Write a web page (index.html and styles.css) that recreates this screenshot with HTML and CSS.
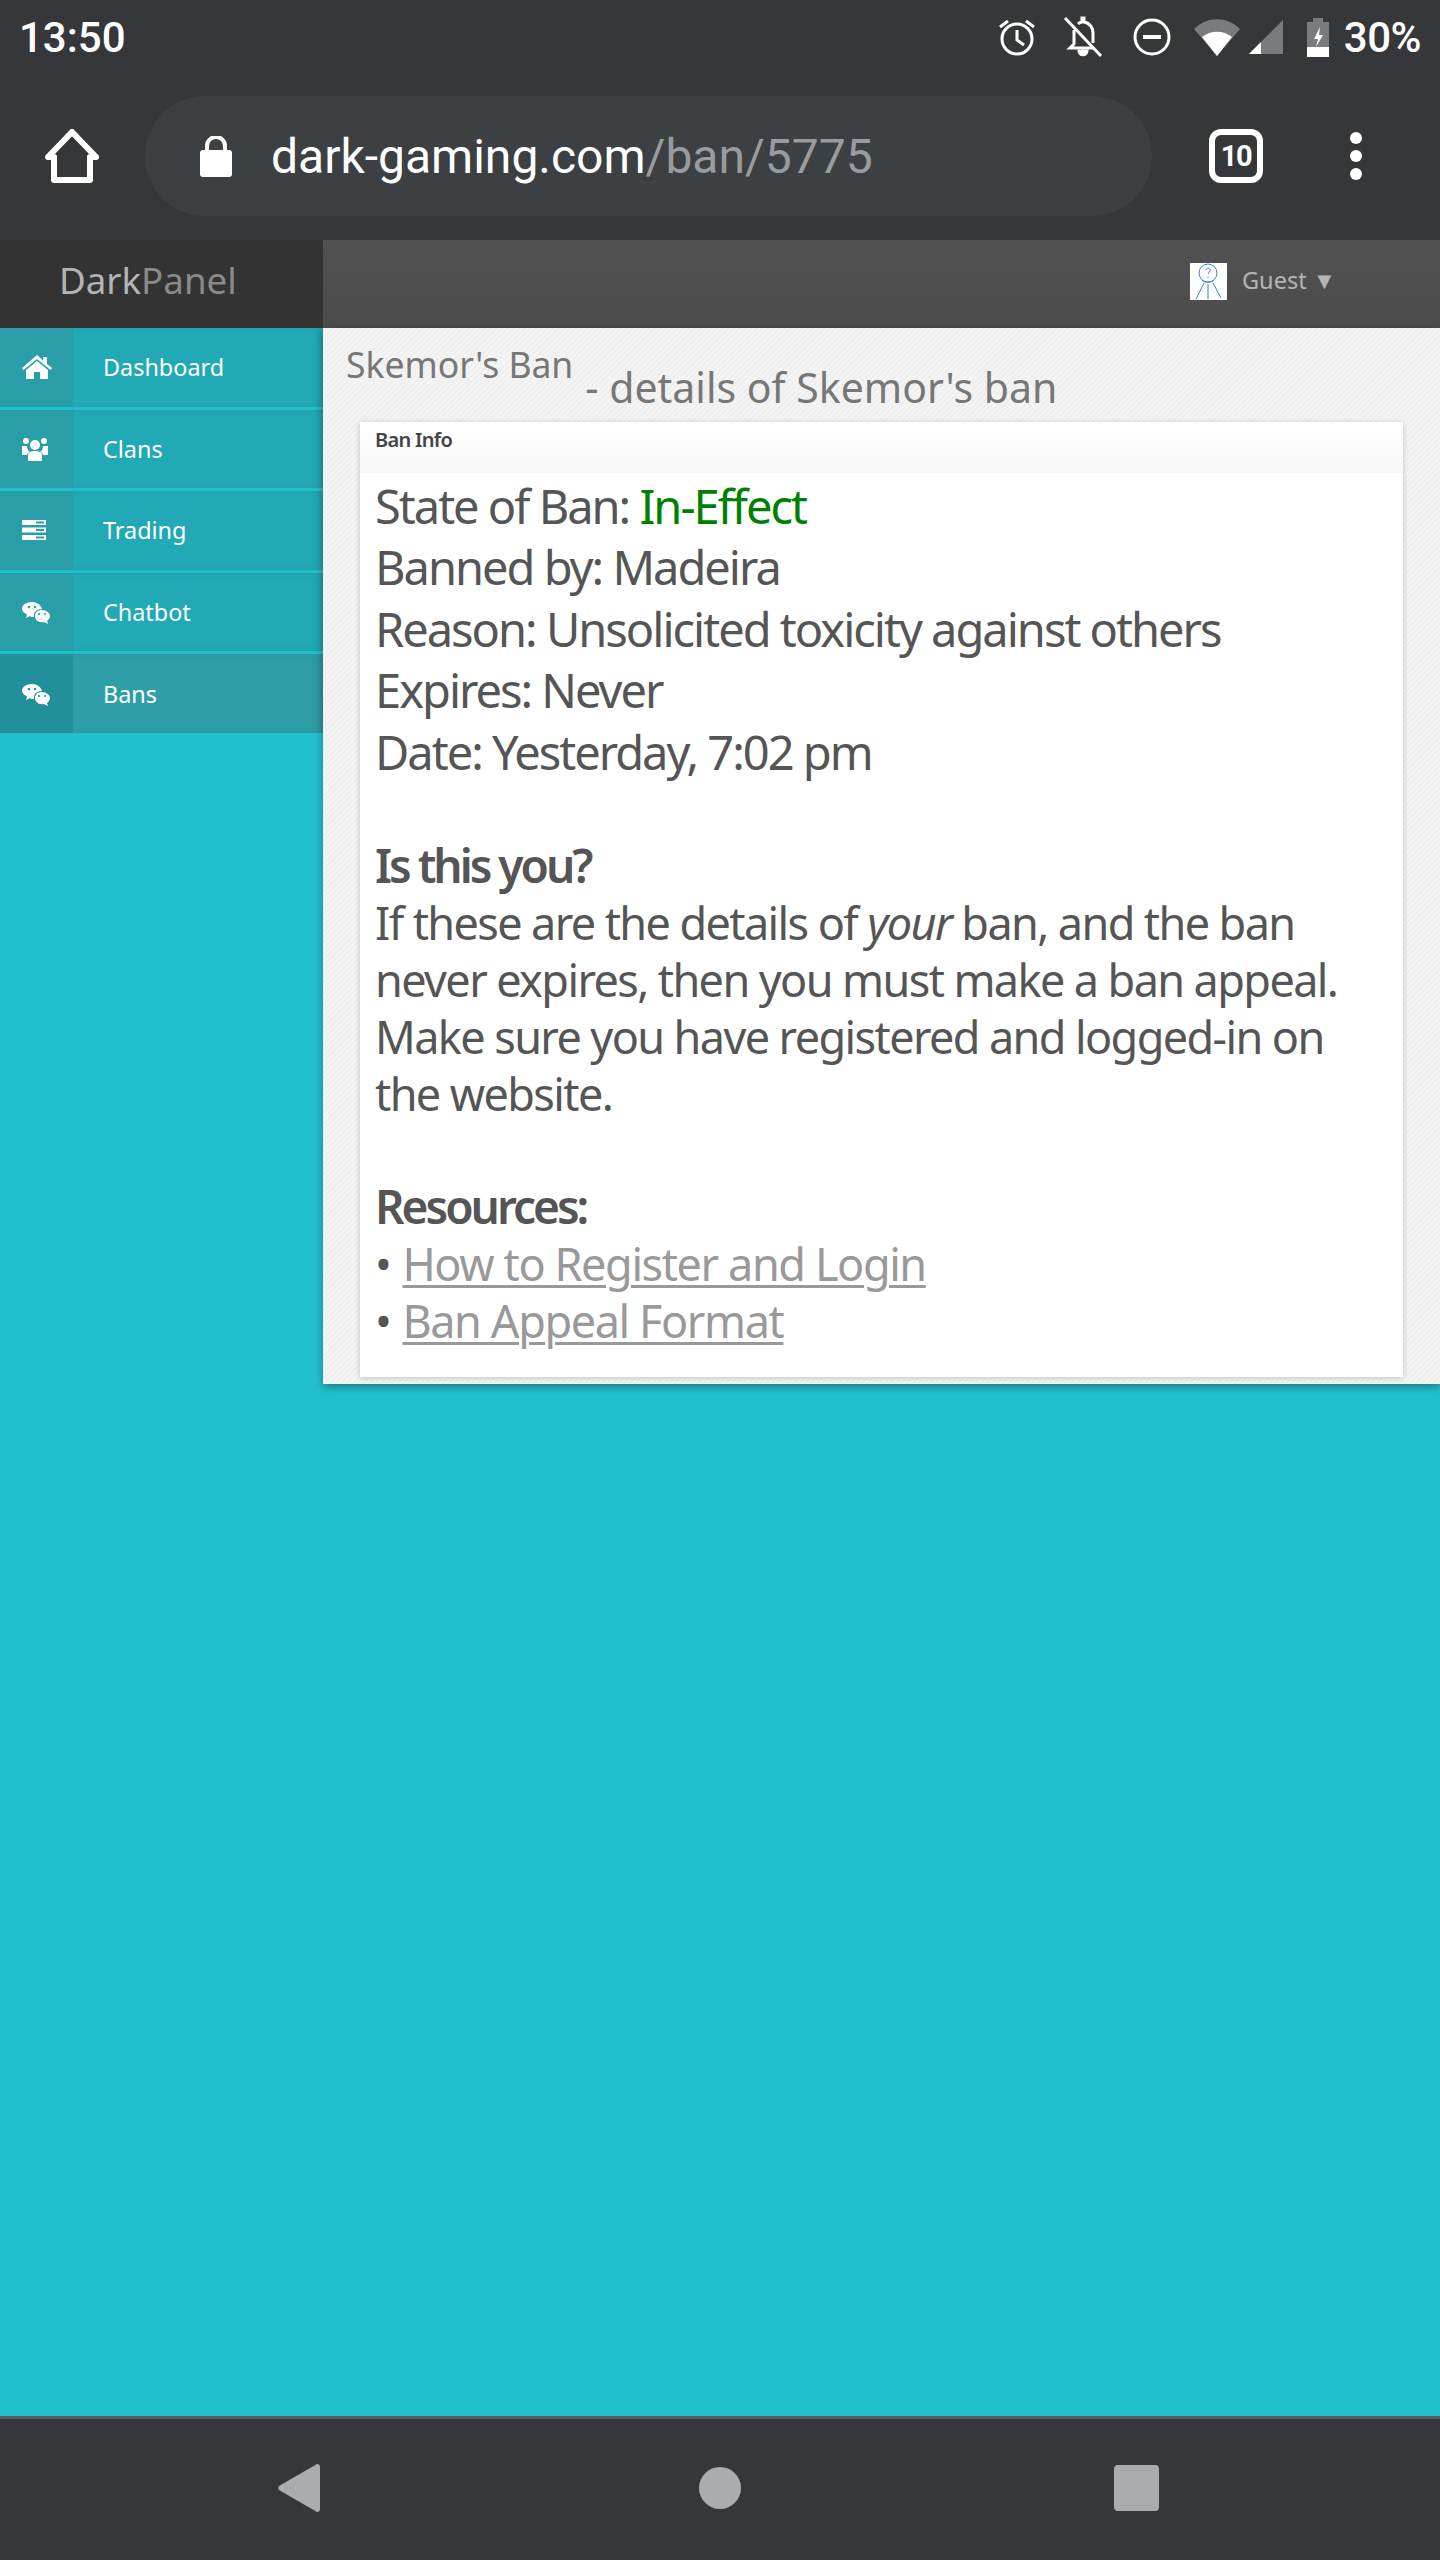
FILE: index.html
```html
<!DOCTYPE html>
<html lang="en">

<head>
  <meta charset="UTF-8">
  <meta name="viewport" content="width=device-width, initial-scale=1.0">
  <title>Skemor's Ban</title>
  <link rel="stylesheet" href="styles.css">
</head>

<body>
  <div class="status-bar">
    <span class="status-time">13:50</span>
    <div class="status-icons">
      <svg class="ic-alarm" width="38" height="38" viewBox="0 0 38 38" fill="none" stroke="#fff" stroke-width="3">
        <circle cx="19" cy="21" r="15" />
        <path d="M19 12v10l7 5" />
        <path d="M2 9l8-6M36 9l-8-6" />
      </svg>
      <svg class="ic-bell" width="40" height="42" viewBox="0 0 40 42" fill="none" stroke="#fff" stroke-width="3">
        <path d="M11 14v14l-4 4h24M15 8c1-1 3-2 4-2V2h2v4c6 1 9 6 9 11v10" />
        <path d="M16 35c0 5 8 5 8 0z" fill="#fff" />
        <path d="M2 2l36 38" />
      </svg>
      <svg class="ic-dnd" width="38" height="38" viewBox="0 0 38 38" fill="none" stroke="#fff" stroke-width="3">
        <circle cx="19" cy="19" r="17" />
        <path d="M10 19h18" stroke-width="4" />
      </svg>
      <svg class="ic-wifi" width="46" height="37" viewBox="0 0 46 37">
        <path d="M0 10C13-3 33-3 46 10L23 37z" fill="#7a7b7d" />
        <path d="M8 18c9-7 21-7 30 0L23 37z" fill="#fff" />
      </svg>
      <svg class="ic-signal" width="34" height="34" viewBox="0 0 34 34">
        <path d="M34 0v34H0z" fill="#7a7b7d" />
        <path d="M12 22v12H0z" fill="#fff" />
      </svg>
      <svg class="ic-battery" width="22" height="39" viewBox="0 0 22 39">
        <path d="M6 0h10v4h6v35H0V4h6z" fill="#7a7b7d" />
        <path d="M0 29h22v10H0z" fill="#fff" />
        <path d="M13 9l-6 12h4l-2 8 7-12h-4z" fill="#fff" />
      </svg>
      <span class="status-battery">30%</span>
    </div>
  </div>

  <div class="toolbar">
    <svg class="ic-home" width="54" height="54" viewBox="0 0 54 54" fill="none" stroke="#fff" stroke-width="6" stroke-linejoin="round">
      <path d="M3 28L27 3l24 25h-6v23H9V28z" />
    </svg>
    <div class="url-pill">
      <svg class="ic-lock" width="32" height="41" viewBox="0 0 32 41">
        <path d="M7 15V10a9 9 0 0 1 18 0v5" fill="none" stroke="#fff" stroke-width="4" />
        <rect x="0" y="14" width="32" height="27" rx="3" fill="#fff" />
      </svg>
      <span class="url-text">dark-gaming.com<span class="url-path">/ban/5775</span></span>
    </div>
    <div class="tab-count">10</div>
    <div class="menu-dots"><i></i><i></i><i></i></div>
  </div>

  <div class="app">
    <header class="app-header">
      <div class="brand">Dark<span>Panel</span></div>
      <div class="user-bar">
        <svg class="avatar" width="37" height="37" viewBox="0 0 37 37" fill="none" stroke="#3f7fe0" stroke-width="1">
          <rect width="37" height="37" fill="#fff" stroke="none" />
          <ellipse cx="18" cy="10" rx="9" ry="9" />
          <path d="M16 7c1-3 5-2 4 1l-2 3M18 14v1" />
          <path d="M12 17c2 3 10 3 12 0M14 20L6 36M23 20l8 15M18 21v15" />
        </svg>
        <span class="user-name">Guest ▼</span>
      </div>
    </header>

    <div class="app-body">
      <nav class="sidebar">
        <a class="nav-item">
          <span class="nav-icon">
            <svg width="30" height="24" viewBox="0 0 30 24" fill="#fff">
              <path d="M15 0L0 13l1.500 2L15 4l13.500 11 1.500-2-5-4V2h-4v3.500z" />
              <path d="M15 6L4 15v9h8v-7h6v7h8v-9z" />
            </svg>
          </span>
          <span class="nav-label">Dashboard</span>
        </a>
        <a class="nav-item">
          <span class="nav-icon">
            <svg width="26" height="24" viewBox="0 0 26 24" fill="#fff">
              <circle cx="4" cy="4" r="3" />
              <circle cx="22" cy="4" r="3" />
              <circle cx="13" cy="8" r="5" />
              <path d="M0 9h5c0 3 1 5 3 6-2 1-3 2-3 3H0zM26 9h-5c0 3-1 5-3 6 2 1 3 2 3 3h5z" />
              <path d="M6 24v-5c0-4 3-5 7-5s7 1 7 5v5z" />
            </svg>
          </span>
          <span class="nav-label">Clans</span>
        </a>
        <a class="nav-item">
          <span class="nav-icon">
            <svg width="24" height="20" viewBox="0 0 24 20" fill="#fff">
              <path d="M0 0h24v5H0zM0 7.500h24v5H0zM0 15h24v5H0z" />
              <path d="M14 1.500h8v2h-8zM14 9h8v2h-8zM14 16.500h8v2h-8z" fill="#2a9ea8" />
            </svg>
          </span>
          <span class="nav-label">Trading</span>
        </a>
        <a class="nav-item">
          <span class="nav-icon">
            <svg class="ic-chat" width="28" height="23" viewBox="0 0 28 23">
              <path d="M10 0c5 0 9 3 10 7-5 0-9 3-8 8-2 0-3 0-4-1l-4 2 1-3.500C2 11 0 9 0 7c0-4 4-7 10-7z" fill="#fff" />
              <path d="M20 8c4 0 8 3 8 6 0 2-1 3-3 5l1 3-4-2c-5 1-9-2-9-6s3-6 7-6z" fill="#fff" />
              <circle cx="7" cy="5" r="1.300" fill="#22a9b6" />
              <circle cx="13" cy="5" r="1.300" fill="#22a9b6" />
              <circle cx="17" cy="12" r="1.100" fill="#22a9b6" />
              <circle cx="23" cy="12" r="1.100" fill="#22a9b6" />
            </svg>
          </span>
          <span class="nav-label">Chatbot</span>
        </a>
        <a class="nav-item active">
          <span class="nav-icon">
            <svg class="ic-chat" width="28" height="23" viewBox="0 0 28 23">
              <path d="M10 0c5 0 9 3 10 7-5 0-9 3-8 8-2 0-3 0-4-1l-4 2 1-3.500C2 11 0 9 0 7c0-4 4-7 10-7z" fill="#fff" />
              <path d="M20 8c4 0 8 3 8 6 0 2-1 3-3 5l1 3-4-2c-5 1-9-2-9-6s3-6 7-6z" fill="#fff" />
              <circle cx="7" cy="5" r="1.300" fill="#22909a" />
              <circle cx="13" cy="5" r="1.300" fill="#22909a" />
              <circle cx="17" cy="12" r="1.100" fill="#22909a" />
              <circle cx="23" cy="12" r="1.100" fill="#22909a" />
            </svg>
          </span>
          <span class="nav-label">Bans</span>
        </a>
      </nav>

      <main class="content">
        <div class="page-title">
          <h1>Skemor's Ban</h1>
          <small>- details of Skemor's ban</small>
        </div>
        <section class="card">
          <div class="card-head">Ban Info</div>
          <div class="card-body">
            <div class="facts">
              State of Ban: <span class="state-on">In-Effect</span><br>
              Banned by: Madeira<br>
              Reason: Unsolicited toxicity against others<br>
              Expires: Never<br>
              Date: Yesterday, 7:02 pm
            </div>
            <h3>Is this you?</h3>
            <p>If these are the details of <em>your</em> ban, and the ban never expires, then you must make a ban appeal. Make sure you have registered and logged-in on the website.</p>
            <h3>Resources:</h3>
            <p>• <a href="#">How to Register and Login</a><br>• <a href="#">Ban Appeal Format</a></p>
          </div>
        </section>
      </main>
    </div>
  </div>

  <div class="nav-bar">
    <svg width="42" height="48" viewBox="0 0 42 48" fill="#abacae">
      <path d="M39 0c2 0 3 1 3 3v42c0 2-1 3-3 3L1 26c-1-1-1-3 0-4z" />
    </svg>
    <div class="nav-home"></div>
    <div class="nav-recent"></div>
  </div>
</body>

</html>
```

FILE: styles.css
```css
* {
  box-sizing: border-box;
}

body {
  margin: 0;
  width: 1440px;
  height: 2560px;
  display: flex;
  flex-direction: column;
  font-family: "Noto Sans", sans-serif;
  background-color: #22c0cc;
  overflow: hidden;
}

/* phone chrome */
.status-bar {
  height: 96px;
  padding: 0 19px 22px 19px;
  display: flex;
  justify-content: space-between;
  align-items: center;
  background: #36373b;
  color: #fff;
  font-family: Roboto, sans-serif;
  font-size: 42px;
  font-weight: 500;
}

.status-icons {
  display: flex;
  align-items: center;
}

.status-icons svg {
  flex: none;
}

.ic-bell {
  margin-left: 27px;
}

.ic-dnd {
  margin-left: 30px;
}

.ic-wifi {
  margin-left: 23px;
}

.ic-signal {
  margin-left: 9px;
}

.ic-battery {
  margin-left: 24px;
}

.status-battery {
  margin-left: 15px;
  letter-spacing: -0.5px;
}

.toolbar {
  height: 144px;
  padding: 0 0 24px 45px;
  display: flex;
  align-items: center;
  background: #36373b;
}

.url-pill {
  width: 1007px;
  height: 120px;
  margin-left: 46px;
  padding-left: 55px;
  display: flex;
  align-items: center;
  border-radius: 60px;
  background: #3c4043;
}

.url-text {
  margin-left: 39px;
  font-family: Roboto, sans-serif;
  font-size: 48px;
  color: #fff;
}

.url-path {
  color: #9a9b9d;
}

.tab-count {
  width: 54px;
  height: 54px;
  margin-left: 57px;
  display: flex;
  justify-content: center;
  align-items: center;
  border: 6px solid #fff;
  border-radius: 12px;
  font-family: Roboto, sans-serif;
  font-size: 29px;
  font-weight: 700;
  letter-spacing: -1.5px;
  color: #fff;
}

.menu-dots {
  margin-left: 87px;
  display: flex;
  flex-direction: column;
  gap: 6px;
}

.menu-dots i {
  width: 12px;
  height: 12px;
  border-radius: 50%;
  background: #fff;
}

/* dark panel */
.app {
  flex: 1;
  display: flex;
  flex-direction: column;
}

.app-header {
  height: 88px;
  display: flex;
  background: linear-gradient(#515151, #4c4c4c);
}

.brand {
  width: 323px;
  padding: 15px 0 0 59px;
  background: #333;
  font-size: 36.700px;
  color: #b4b4b4;
}

.brand span {
  color: #8a8a8a;
}

.user-bar {
  flex: 1;
  padding: 23px 0 0 867px;
  display: flex;
  align-items: flex-start;
}

.avatar {
  flex: none;
}

.user-name {
  margin: 1px 0 0 15px;
  font-size: 23.500px;
  line-height: 33px;
  color: #b4b4b4;
}

.app-body {
  display: flex;
  align-items: flex-start;
}

.sidebar {
  width: 323px;
  flex: none;
}

.nav-item {
  height: 81.600px;
  display: flex;
  border-bottom: 3px solid #1fbfcc;
  background: #22a9b6;
  box-shadow: inset -6px 0 6px rgba(0, 0, 0, 0.06);
  color: #fff;
  font-size: 23.400px;
}

.nav-item.active {
  background: #2e9ea8;
}

.nav-icon {
  width: 73px;
  padding-left: 22px;
  display: flex;
  align-items: center;
  background: #2a9ea8;
}

.active .nav-icon {
  background: #22909a;
}

.ic-chat {
  margin-top: 3px;
}

.nav-label {
  margin-left: 30px;
  align-self: center;
}

.content {
  flex: 1;
  height: 1056px;
  padding-top: 12px;
  background: repeating-linear-gradient(135deg, #f4f4f4 0 2px, #efefef 2px 4px);
  box-shadow: 0 3px 8px rgba(0, 0, 0, 0.35);
}

.page-title {
  padding-left: 23px;
  display: flex;
  color: #777;
}

.page-title h1 {
  margin: 0;
  font-size: 35.500px;
  font-weight: 400;
  line-height: 49px;
}

.page-title small {
  margin: 20px 0 0 12px;
  font-size: 41px;
  line-height: 54px;
}

.card {
  width: 1043px;
  height: 955px;
  margin: 8px 0 0 37px;
  background: #fff;
  box-shadow: 0 1px 6px rgba(0, 0, 0, 0.2);
  color: #555;
}

.card-head {
  height: 51px;
  padding: 4px 15px;
  background: linear-gradient(#fff, #f8f8f8);
  font-size: 20px;
  font-weight: 600;
  letter-spacing: -0.7px;
  color: #444;
}

.card-body {
  padding: 3px 15px;
  font-size: 45px;
  letter-spacing: -1.600px;
  line-height: 57px;
}

.facts {
  font-size: 47px;
  letter-spacing: -2px;
  line-height: 61.400px;
  margin-bottom: 54px;
}

.state-on {
  color: green;
}

.card-body h3 {
  margin: 0;
  font-size: 46px;
  font-weight: 600;
  line-height: 57px;
  letter-spacing: -3px;
}

.card-body p {
  margin: 0 0 56px;
}

.card-body a {
  margin-left: 2px;
  color: #999;
  letter-spacing: -1.400px;
  text-decoration-thickness: 3px;
  text-underline-offset: 4px;
}

.nav-bar {
  height: 144px;
  padding: 45px 281px 0 278px;
  display: flex;
  justify-content: space-between;
  align-items: flex-start;
  border-top: 3px solid #5a5a60;
  background: #36373b;
}

.nav-home {
  width: 42px;
  height: 42px;
  margin: 3px 0 0 6px;
  border-radius: 50%;
  background: #abacae;
}

.nav-recent {
  width: 45px;
  height: 46px;
  margin-top: 1px;
  border-radius: 4px;
  background: #abacae;
}
```
